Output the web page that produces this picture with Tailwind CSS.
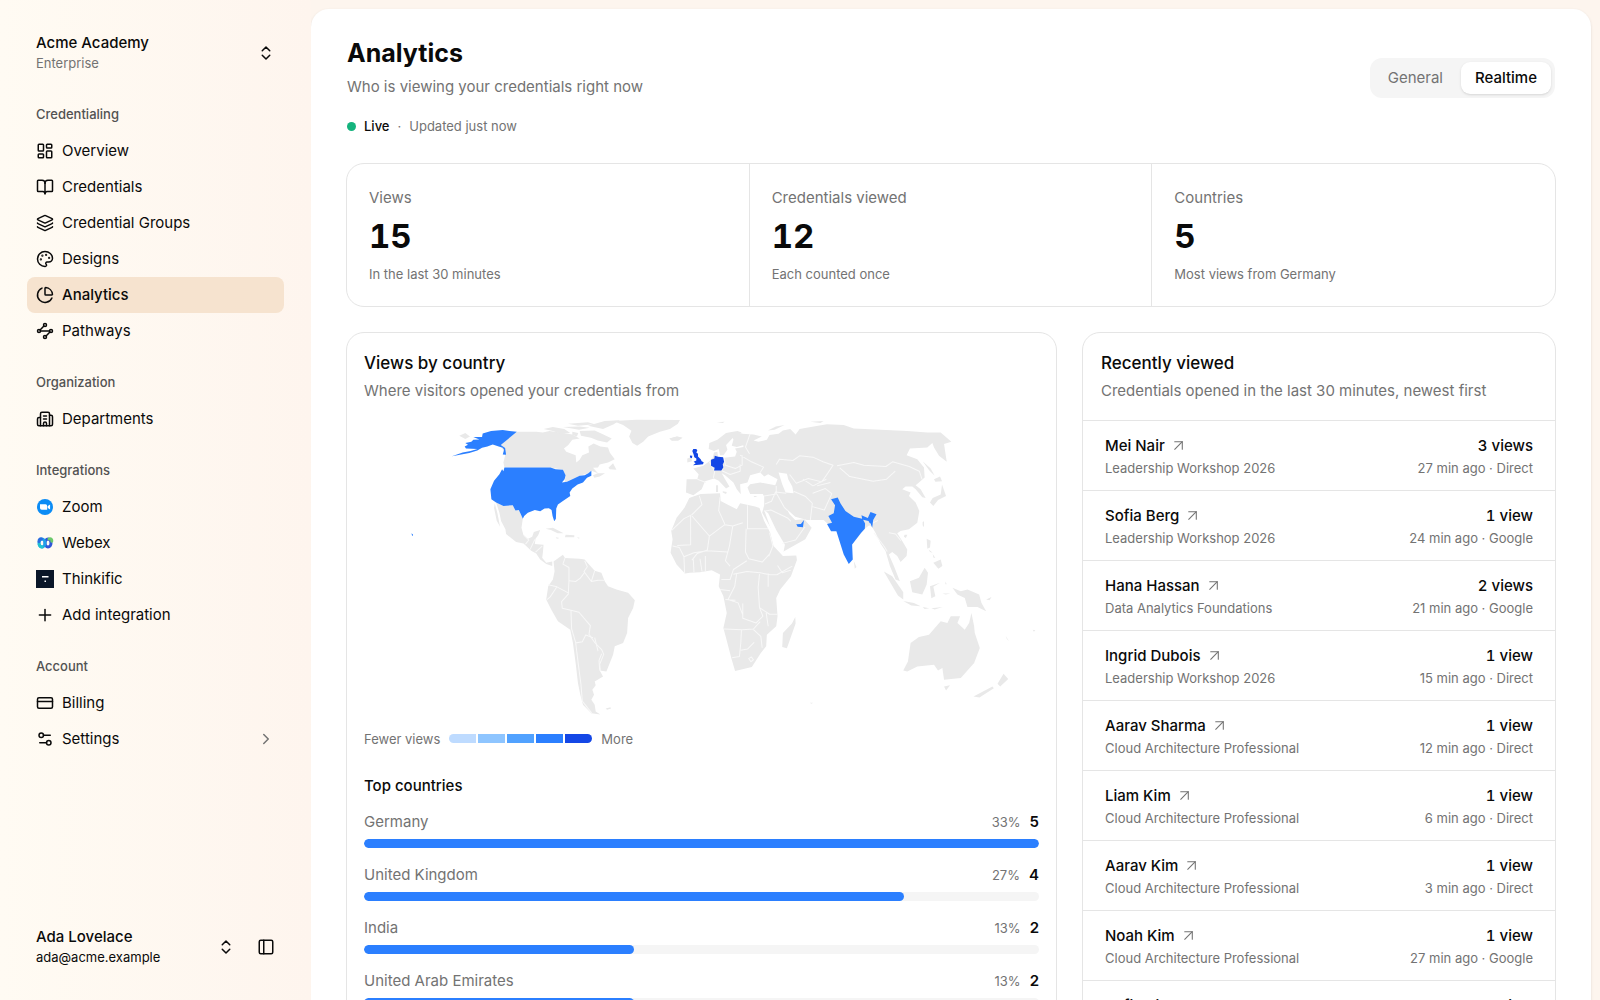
<!DOCTYPE html>
<html lang="en">
<head>
  <meta charset="UTF-8" />
  <meta name="viewport" content="width=device-width, initial-scale=1.0" />
  <title>Analytics - Acme Academy</title>
  <script src="https://cdn.jsdelivr.net/npm/@tailwindcss/browser@4"></script>
</head>
<body class="flex min-h-screen bg-[#fdf5ee] font-['Inter','Liberation_Sans',sans-serif] text-[15px] text-neutral-950">

  <!-- Sidebar -->
  <aside class="sticky top-0 flex h-screen w-[311px] shrink-0 flex-col bg-linear-to-r from-[#fffbf3] to-[#fef5ee] px-[27px] pb-6">
    <button class="flex h-[97px] items-center justify-between px-[9px] pt-[9px] text-left">
      <span class="flex flex-col">
        <span class="font-medium leading-5">Acme Academy</span>
        <span class="text-[13px] leading-5 text-neutral-500">Enterprise</span>
      </span>
      <svg class="size-[18px]" viewBox="0 0 24 24" fill="none" stroke="currentColor" stroke-width="2" stroke-linecap="round" stroke-linejoin="round"><path d="m7 15 5 5 5-5"/><path d="m7 9 5-5 5 5"/></svg>
    </button>

    <nav class="flex flex-1 flex-col gap-4">
      <div>
        <h2 class="flex h-9 items-center px-[9px] text-[13px] font-medium text-neutral-600">Credentialing</h2>
        <a href="#" class="flex h-9 items-center gap-2 rounded-lg px-[9px]">
          <svg class="size-[18px]" viewBox="0 0 24 24" fill="none" stroke="currentColor" stroke-width="2" stroke-linecap="round" stroke-linejoin="round"><rect width="7" height="9" x="3" y="3" rx="1"/><rect width="7" height="5" x="14" y="3" rx="1"/><rect width="7" height="9" x="14" y="12" rx="1"/><rect width="7" height="5" x="3" y="16" rx="1"/></svg>
          Overview
        </a>
        <a href="#" class="flex h-9 items-center gap-2 rounded-lg px-[9px]">
          <svg class="size-[18px]" viewBox="0 0 24 24" fill="none" stroke="currentColor" stroke-width="2" stroke-linecap="round" stroke-linejoin="round"><path d="M12 7v14"/><path d="M3 18a1 1 0 0 1-1-1V4a1 1 0 0 1 1-1h5a4 4 0 0 1 4 4 4 4 0 0 1 4-4h5a1 1 0 0 1 1 1v13a1 1 0 0 1-1 1h-6a3 3 0 0 0-3 3 3 3 0 0 0-3-3z"/></svg>
          Credentials
        </a>
        <a href="#" class="flex h-9 items-center gap-2 rounded-lg px-[9px]">
          <svg class="size-[18px]" viewBox="0 0 24 24" fill="none" stroke="currentColor" stroke-width="2" stroke-linecap="round" stroke-linejoin="round"><path d="M12.83 2.18a2 2 0 0 0-1.66 0L2.6 6.08a1 1 0 0 0 0 1.83l8.58 3.91a2 2 0 0 0 1.66 0l8.58-3.9a1 1 0 0 0 0-1.83z"/><path d="M2 12a1 1 0 0 0 .58.91l8.6 3.91a2 2 0 0 0 1.65 0l8.58-3.9A1 1 0 0 0 22 12"/><path d="M2 17a1 1 0 0 0 .58.91l8.6 3.91a2 2 0 0 0 1.65 0l8.58-3.9A1 1 0 0 0 22 17"/></svg>
          Credential Groups
        </a>
        <a href="#" class="flex h-9 items-center gap-2 rounded-lg px-[9px]">
          <svg class="size-[18px]" viewBox="0 0 24 24" fill="none" stroke="currentColor" stroke-width="2" stroke-linecap="round" stroke-linejoin="round"><path d="M12 22a1 1 0 0 1 0-20 10 9 0 0 1 10 9 5 5 0 0 1-5 5h-2.25a1.75 1.75 0 0 0-1.4 2.8l.3.4a1.75 1.75 0 0 1-1.4 2.8z"/><circle cx="13.5" cy="6.5" r=".5" fill="currentColor"/><circle cx="17.5" cy="10.5" r=".5" fill="currentColor"/><circle cx="6.5" cy="12.5" r=".5" fill="currentColor"/><circle cx="8.5" cy="7.5" r=".5" fill="currentColor"/></svg>
          Designs
        </a>
        <a href="#" aria-current="page" class="flex h-9 items-center gap-2 rounded-lg bg-[#f6e3cf] px-[9px] font-medium">
          <svg class="size-[18px]" viewBox="0 0 24 24" fill="none" stroke="currentColor" stroke-width="2" stroke-linecap="round" stroke-linejoin="round"><path d="M21 12c.552 0 1.005-.449.95-.998a10 10 0 0 0-8.953-8.951c-.55-.055-.998.398-.998.95v8a1 1 0 0 0 1 1z"/><path d="M21.21 15.89A10 10 0 1 1 8 2.83"/></svg>
          Analytics
        </a>
        <a href="#" class="flex h-9 items-center gap-2 rounded-lg px-[9px]">
          <svg class="size-[18px]" viewBox="0 0 24 24" fill="none" stroke="currentColor" stroke-width="2" stroke-linecap="round" stroke-linejoin="round"><path d="m10.586 5.414-5.172 5.172"/><path d="m18.586 13.414-5.172 5.172"/><path d="M6 12h12"/><circle cx="12" cy="20" r="2"/><circle cx="12" cy="4" r="2"/><circle cx="20" cy="12" r="2"/><circle cx="4" cy="12" r="2"/></svg>
          Pathways
        </a>
      </div>

      <div>
        <h2 class="flex h-9 items-center px-[9px] text-[13px] font-medium text-neutral-600">Organization</h2>
        <a href="#" class="flex h-9 items-center gap-2 rounded-lg px-[9px]">
          <svg class="size-[18px]" viewBox="0 0 24 24" fill="none" stroke="currentColor" stroke-width="2" stroke-linecap="round" stroke-linejoin="round"><path d="M10 12h4"/><path d="M10 8h4"/><path d="M14 21v-3a2 2 0 0 0-4 0v3"/><path d="M6 10H4a2 2 0 0 0-2 2v7a2 2 0 0 0 2 2h16a2 2 0 0 0 2-2V9a2 2 0 0 0-2-2h-2"/><path d="M6 21V5a2 2 0 0 1 2-2h8a2 2 0 0 1 2 2v16"/></svg>
          Departments
        </a>
      </div>

      <div>
        <h2 class="flex h-9 items-center px-[9px] text-[13px] font-medium text-neutral-600">Integrations</h2>
        <a href="#" class="flex h-9 items-center gap-2 rounded-lg px-[9px]">
          <svg class="size-[18px]" viewBox="0 0 18 18"><circle cx="9" cy="9" r="8" fill="#0b8cf5"/><path d="M4 6.200h5.500a1.700 1.700 0 0 1 1.700 1.700v3.900H5.700A1.700 1.700 0 0 1 4 10.100zM11.800 8l2.300-1.600v5.200L11.800 10z" fill="#fff"/></svg>
          Zoom
        </a>
        <a href="#" class="flex h-9 items-center gap-2 rounded-lg px-[9px]">
          <svg class="size-[18px]" viewBox="0 0 18 18" fill="none" stroke-width="3" stroke-linecap="round"><ellipse cx="12" cy="9" rx="3" ry="4" stroke="#2f56d8"/><path d="M13 5c2-.6 3 .4 2.800 2.200" stroke="#6cc96b"/><ellipse cx="6" cy="9" rx="3" ry="4" stroke="#1f9fe8"/><path d="M3 7.500c0-2 1-2.800 2.500-2.600" stroke="#2a6de0"/><path d="M3.200 10.500c.6 1.800 1.600 2.600 3 2.500" stroke="#20c3cf"/></svg>
          Webex
        </a>
        <a href="#" class="flex h-9 items-center gap-2 rounded-lg px-[9px]">
          <svg class="size-[18px]" viewBox="0 0 18 18"><path d="M0 0h18v18H0z" fill="#0a1628"/><path d="M6 6h6.500v1.500H6zM8.500 10.500h1.500v1.500H8.500z" fill="#fff"/></svg>
          Thinkific
        </a>
        <a href="#" class="flex h-9 items-center gap-2 rounded-lg px-[9px]">
          <svg class="size-[18px]" viewBox="0 0 24 24" fill="none" stroke="currentColor" stroke-width="2" stroke-linecap="round"><path d="M4.500 12h15"/><path d="M12 4.500v15"/></svg>
          Add integration
        </a>
      </div>

      <div>
        <h2 class="flex h-9 items-center px-[9px] text-[13px] font-medium text-neutral-600">Account</h2>
        <a href="#" class="flex h-9 items-center gap-2 rounded-lg px-[9px]">
          <svg class="size-[18px]" viewBox="0 0 24 24" fill="none" stroke="currentColor" stroke-width="2" stroke-linecap="round" stroke-linejoin="round"><rect width="20" height="14" x="2" y="5" rx="2"/><path d="M2 10h20"/></svg>
          Billing
        </a>
        <a href="#" class="flex h-9 items-center gap-2 rounded-lg px-[9px]">
          <svg class="size-[18px]" viewBox="0 0 24 24" fill="none" stroke="currentColor" stroke-width="2" stroke-linecap="round" stroke-linejoin="round"><path d="M14 17H5"/><path d="M19 7h-9"/><circle cx="17" cy="17" r="3"/><circle cx="7" cy="7" r="3"/></svg>
          <span class="flex-1">Settings</span>
          <svg class="size-[18px] text-neutral-500" viewBox="0 0 24 24" fill="none" stroke="currentColor" stroke-width="2" stroke-linecap="round" stroke-linejoin="round"><path d="m9 18 6-6-6-6"/></svg>
        </a>
      </div>
    </nav>

    <div class="flex items-center px-[9px] pb-[9px]">
      <button class="flex flex-1 items-center justify-between text-left">
        <span class="flex flex-col">
          <span class="font-medium leading-5">Ada Lovelace</span>
          <span class="text-[13px] leading-5">ada@acme.example</span>
        </span>
        <svg class="size-[18px]" viewBox="0 0 24 24" fill="none" stroke="currentColor" stroke-width="2" stroke-linecap="round" stroke-linejoin="round"><path d="m7 15 5 5 5-5"/><path d="m7 9 5-5 5 5"/></svg>
      </button>
      <button aria-label="Toggle sidebar" class="ml-[22px]">
        <svg class="size-[18px]" viewBox="0 0 24 24" fill="none" stroke="currentColor" stroke-width="2" stroke-linecap="round" stroke-linejoin="round"><rect width="18" height="18" x="3" y="3" rx="2"/><path d="M9 3v18"/></svg>
      </button>
    </div>
  </aside>

  <!-- Page -->
  <main class="my-[9px] mr-[9px] min-w-0 flex-1 rounded-[18px] bg-white px-[35px] pt-7 pb-9 shadow-sm">
    <header class="flex items-start justify-between px-px">
      <div>
        <h1 class="text-[25px] font-bold leading-8">Analytics</h1>
        <p class="mt-[6px] leading-6 text-neutral-500">Who is viewing your credentials right now</p>
        <p class="mt-[17px] flex items-center gap-2 text-[13px] leading-5 text-neutral-500">
          <span class="size-[9px] rounded-full bg-[#14b37d]"></span>
          <span class="font-medium text-neutral-950">Live</span>
          <span>·</span>
          <span>Updated just now</span>
        </p>
      </div>
      <div class="mt-[21px] flex h-10 items-center gap-1 rounded-xl bg-neutral-100 p-1 text-neutral-500">
        <button class="h-full px-[14px]">General</button>
        <button class="h-full rounded-[9px] bg-white px-[14px] font-medium text-neutral-950 shadow-sm">Realtime</button>
      </div>
    </header>

    <section class="mt-[27px] grid grid-cols-3 divide-x divide-neutral-200 rounded-[18px] border border-neutral-200">
      <div class="px-[22px] py-[22px]">
        <p class="leading-6 text-neutral-500">Views</p>
        <p class="mt-[6px] text-[33px] font-bold leading-10 tabular-nums">15</p>
        <p class="mt-2 text-[13px] leading-5 text-neutral-500">In the last 30 minutes</p>
      </div>
      <div class="px-[22px] py-[22px]">
        <p class="leading-6 text-neutral-500">Credentials viewed</p>
        <p class="mt-[6px] text-[33px] font-bold leading-10 tabular-nums">12</p>
        <p class="mt-2 text-[13px] leading-5 text-neutral-500">Each counted once</p>
      </div>
      <div class="px-[22px] py-[22px]">
        <p class="leading-6 text-neutral-500">Countries</p>
        <p class="mt-[6px] text-[33px] font-bold leading-10 tabular-nums">5</p>
        <p class="mt-2 text-[13px] leading-5 text-neutral-500">Most views from Germany</p>
      </div>
    </section>

    <div class="mt-[25px] grid grid-cols-[3fr_2fr] gap-[25px]">
      <section class="rounded-[18px] border border-neutral-200 px-[17px] pt-[18px] pb-6">
        <h2 class="text-[17px] font-medium leading-6">Views by country</h2>
        <p class="mt-1 leading-6 text-neutral-500">Where visitors opened your credentials from</p>

        <svg class="mt-2 w-full" viewBox="45 36 2019 930" role="img" aria-label="World map of views by country" stroke-linejoin="round">
          <!-- Americas -->
          <g fill="#e9e9e9">
            <path d="M502 98L560 98 580 100 600 96 640 102 668 106 690 118 668 122 656 138 643 148 650 158 678 168 680 190 690 182 698 168 718 160 716 142 732 133 752 142 775 145 780 160 795 180 775 190 750 196 745 205 730 206 745 222 725 215 716 222 690 230 668 240 645 250 648 228 640 212 603 205 465 205 462 190 468 165 452 138z"/>
            <path d="M582 90l28-6 34 6 18 12-30 2-22-8zM690 96l45-2 26 12 25 12-14 12-28-6-20-8-30-6zM640 84l50-2 30 4-32 6zM655 74l60-4 20 6-50 4zM715 80l50-14 45-2-18 12-32 14zM668 98l18 4-4 10-14-4z"/>
            <path d="M790 66L860 62 990 63 984 74 960 90 930 98 895 112 880 128 862 140 848 132 838 112 845 95 820 78zM958 118l22-6 18 4-12 8-20 1zM776 206l14-14 10 20-20-2zM730 228l14-6 22 0-16 10-16 4zM330 110l18-8 14 10-14 8z"/>
            <path d="M440 310L462 320 490 318 498 334 508 332 520 358 516 385 522 408 536 418 548 412 553 398 572 392 566 408 558 418 556 434 582 436 580 460 578 475 590 490 608 486 608 500 590 494 572 480 560 462 545 454 522 432 500 428 470 404 468 390 455 365 450 340z"/>
            <path d="M436 312l8 30 8 40-10-18-8-38zM588 388l22-3 32 17-18 0-20-10zM648 406l26 2 0 6-28 0zM618 414l12 2-8 2zM682 414l8 1-2 3zM768 926l14-4 2 4-12 4z"/>
            <path d="M612 486L640 466 646 476 690 478 705 480 722 500 735 514 755 520 765 545 775 560 800 570 835 580 855 602 850 625 835 655 832 700 820 730 795 740 790 765 770 815 750 812 760 830 735 845 738 856 728 870 733 885 725 900 735 915 738 935 752 944 725 940 700 915 692 885 685 850 678 790 670 730 662 690 625 665 605 630 590 600 596 560 610 540 615 515z"/>
          </g>
          <g fill="none" stroke="#f8f8f8" stroke-width="3">
            <path d="M646 476l-6 18 18 10 0 40-2 40-20 22 2 20 26 6 24 6 34 40-4 26 18 26 20 20 6 14-12 30 2 20"/>
            <path d="M705 484l8 18-10 14 22 30M735 514l-10 32 20-4 18 0M658 544l20 2 14-10 12-16M596 556l26 6 34 18M622 562l-20 30-10 8M664 632l2 56 12 40 8 66 8 60 4 50 30 38M678 730l20-4 10-20 22 8M735 714l10 40M756 762l-8 20 2 30M524 408l14 14-10 12M556 420l-14 30M578 440l-20 18"/>
          </g>
          <path fill="#2b7fff" d="M465 205H603L618 210 640 212 648 228 645 240 637 250 652 248 668 240 690 230 705 228 716 222 725 215 725 230 712 236 700 250 684 256 668 268 660 280 662 290 640 305 625 316 620 328 619 358 614 366 609 350 606 332 598 327 585 328 572 336 556 332 535 340 524 350 520 358 514 345 508 332 498 334 490 318 462 320 440 310 426 300 423 270 434 245 450 225 458 210 462 216z"/>
          <path fill="#2b7fff" d="M502 98L480 96 460 93 425 96 400 103 398 114 372 114 390 121 372 122 366 128 348 132 356 137 346 142 350 148 384 150 364 156 340 160 308 171 360 162 384 154 398 146 414 142 430 136 448 142 460 146 464 152 460 166 470 167 467 147 454 138zM187 402l5 4-3 5zM180 394l3 2z"/>

          <!-- Europe, Africa and the Middle East -->
          <g transform="translate(870 0)">
            <g fill="#e9e9e9">
              <path d="M148 296L160 292 182 284 240 282 242 305 262 316 290 330 300 312 345 322 358 326 372 365 390 400 400 440 428 470 468 468 470 482 452 530 420 570 408 595 412 650 408 680 380 705 378 740 362 760 335 802 310 808 285 814 275 780 258 715 250 685 260 640 250 590 236 560 240 525 215 512 180 518 150 520 135 522 110 495 92 460 98 420 94 395 110 355 134 325z"/>
              <path d="M465 652L466 672 440 746 426 742 428 700 455 672zM90 118l22-6 14 4-12 8-18 0zM142 178l12-4 2 12-14 4z"/>
              <path d="M206 150L208 132 232 122 258 102 292 96 305 100 290 106 275 120 258 138 262 152 250 168 240 168 236 150 222 156zM275 106L292 98 312 106 312 138 290 144 275 140 280 122z"/>
              <path d="M140 240L172 240 176 225 160 208 190 200 208 186 218 176 222 160 232 158 234 174 252 176 285 172 290 158 285 148 310 144 306 104 340 106 365 112 340 124 355 128 380 122 388 108 415 104 428 94 450 90 466 106 478 90 520 82 560 76 610 78 640 88 720 92 800 96 860 100 900 100 932 128 910 135 918 188 895 170 880 145 875 132 860 145 808 148 798 168 830 180 850 205 852 235 835 250 825 258 840 270 855 296 845 294 825 270 815 262 795 262 785 270 810 280 805 290 825 310 836 335 830 370 805 390 780 395 770 402 785 425 800 450 798 470 780 488 770 470 755 458 745 465 760 500 778 545 765 540 748 500 735 455 720 432 705 400 690 375 673 388 635 435 588 395 560 372 550 362 500 362 465 352 440 330 448 345 465 362 492 360 514 385 495 420 430 456 424 440 400 400 366 340 372 318 372 292 368 284 330 284 322 265 330 255 360 250 405 258 412 240 384 225 372 232 360 220 330 228 322 250 300 255 302 285 290 270 280 250 255 228 245 222 255 240 268 262 258 268 236 245 222 238 195 246 185 270 160 288 138 280z"/>
              <path d="M228 258l6 0 0 20-6 0zM248 276l12 2-2 6-10-4zM383 94l24-12 26-4-30 14zM230 70l24-2-6 4zM510 68l40-2-10 6zM340 290l12 0-8 4z"/>
            </g>
            <path fill="#fff" d="M415 220L440 224 444 240 456 262 460 282 436 280 426 255zM372 332l12 10 24 50 26 44-4 20-30-44z"/>
            <g fill="none" stroke="#f8f8f8" stroke-width="3">
              <path d="M178 290l8 26-30 30-24 12M152 350l0 86-40 2M156 350l52 60 46-34 24 4 30-10M208 410l-6 42-30 10-16 20M240 294l-4 40 18 40M322 318v70h62M278 380l-10 60-12 44 14 16M318 388l-2 70 10 20 40 10 24-26M132 358l-36 34M98 440l20 4 14 28 30-12 40-6 60 4M132 472l2 50M160 480l2 38M180 478l6 38M196 470l0 46M244 540l26 0 10-30 40-26M280 524l40-8 40 4 30 6 20 0 46-26M290 520l-6 40-20 40 30 10 14 36M240 570l30 4M256 600l30 2M308 612l0 44 40 14 20-20-10-26M358 524l-4 40 4 60 30 20 24 0M384 522l0 40M252 688l54 2 34-2 20-22M304 690l-2 40-4 40-22 4M340 690l22 20 4 34M302 752l20-4 20-20M378 640l6 40M326 776l8-4 6 8-8 6zM388 400l10 40-12 30M412 498l14 22 26-8"/>
              <path d="M172 240l26 10M208 188l16 28-4 20M252 176l4 22 30 10 20-10 0-30M252 198l-8 16 26 12 30-10 0-20M300 168l34 20 36 16-10 16M330 104l-14 40 12 20M372 290l36-6 0-24M374 314l20-8 12-28 32 4M410 284l22 40 10 10M372 336l20-4 50 24 10 10M426 432l40-10 28-40M460 276l36 16 20 20-6 50M516 322l36 10 22-48M408 196l10-16 40 4 20-14 40 4 30 14 30 10-20 30-14 20-40-10-36 14-20-26M558 240l-40 20-30-20M530 260l40-10M575 284l-20-16-38 14"/>
              <path d="M590 200l50-10 30 8 66 4 20-14 50 14 30 14 8 24M598 206l30 26 70 14 40-6 26-24M690 375l22-12M745 400l20 4 16 20M700 400l30 40 10 16"/>
            </g>
            <g fill="#1447e6">
              <path d="M157 156l3-6 9 0 3 4-3 6 5 4 0 8 8 8 3 6 6 3-2 6-12 2-18 1 8-6-6-4 8-4 0-6-6-4-2-8zM150 169l7 1-1 7-6-2z"/>
              <path d="M213 182l10-4 1-8 10 3 15 1 3 14-4 8 2 8-6 10-22 0 2-8-11-6z"/>
            </g>
            <path fill="#2b7fff" d="M468 375l14-1 9-12-3 22-16-2z"/>
          </g>

          <!-- South Asia and Oceania -->
          <g transform="translate(1350 0)">
            <g fill="#e9e9e9">
              <path d="M160 485l8 18-5 5zM250 516L275 530 308 578 308 600 292 588zM308 604l32 6 20 10-28-2zM366 622l20 4-14 2zM392 626l34-4-24 8zM328 545L355 535 372 505 382 520 378 555 365 585 335 578z"/>
              <path d="M388 560l30-10-20 12 6 28-12 6zM378 418l12 6-2 20-8 4zM398 490l22-10 5 20-12 8zM384 450l12 10-8-2zM396 464l8 12-6-2zM434 546l4 8-4 0zM455 565L480 575 500 570 535 585 542 610 556 635 530 622 500 622 492 595 470 585zM425 582l24 0-14 3zM556 600l16-8-6 10z"/>
              <path d="M330 730L355 712 385 705 420 665 440 670 450 650 478 650 470 670 492 690 505 670 512 640 520 680 522 700 537 745 520 790 480 835 430 840 425 805 412 812 400 795 350 800 320 815 308 812 322 785z"/>
              <path d="M430 860l18-4-12 16zM518 890l57-30 4 5-43 28zM590 852l18-30 14 16-24 22zM614 708l10 16-6-6zM695 690l8 2-4 4zM706 684l10-2zM590 602l8 6zM612 628l6 4z"/>
              <path d="M388 310l8-14 24-10 4-30 12 34-24 12-14 18zM400 240l18-8 6 14-20 2zM366 186l24 22 12 22-16-16zM366 368l4-2 0 18-4-6zM312 406l8 0-4 10-6-4zM28 909l10 0-4 3z"/>
            </g>
            <path fill="#2b7fff" d="M92 300L112 295 120 312 135 335 160 352 185 358 183 348 202 356 210 338 228 345 218 362 215 385 210 372 194 372 193 388 182 400 155 435 157 480 145 494 130 465 108 396 92 396 80 374 95 370 84 350 100 342 104 318z"/>
            <path fill="#e9e9e9" d="M188 361l16 4 8 14-16-2z"/>
          </g>
        </svg>

        <div class="mt-[7px] flex items-center gap-[9px] text-[13px] leading-5 text-neutral-500">
          Fewer views
          <div class="flex gap-[2px] overflow-hidden rounded-full">
            <span class="h-[9px] w-[27px] bg-[#bedbff]"></span>
            <span class="h-[9px] w-[27px] bg-[#8ec5ff]"></span>
            <span class="h-[9px] w-[27px] bg-[#51a2ff]"></span>
            <span class="h-[9px] w-[27px] bg-[#2b7fff]"></span>
            <span class="h-[9px] w-[27px] bg-[#1447e6]"></span>
          </div>
          More
        </div>

        <h3 class="mt-[25px] font-medium leading-6">Top countries</h3>
        <ul id="countries" class="mt-3 flex flex-col gap-[15px]"></ul>
      </section>

      <section class="rounded-[18px] border border-neutral-200">
        <div class="border-b border-neutral-200 px-[18px] pt-[18px] pb-[17px]">
          <h2 class="text-[17px] font-medium leading-6">Recently viewed</h2>
          <p class="mt-1 leading-6 text-neutral-500">Credentials opened in the last 30 minutes, newest first</p>
        </div>
        <ul id="recent" class="divide-y divide-neutral-200"></ul>
      </section>
    </div>
  </main>

  <script>
    const countries = [
      { name: 'Germany', share: 33, views: 5 },
      { name: 'United Kingdom', share: 27, views: 4 },
      { name: 'India', share: 13, views: 2 },
      { name: 'United Arab Emirates', share: 13, views: 2 },
      { name: 'United States', share: 13, views: 2 },
    ];

    const recent = [
      ['Mei Nair', 'Leadership Workshop 2026', '3 views', '27 min ago · Direct'],
      ['Sofia Berg', 'Leadership Workshop 2026', '1 view', '24 min ago · Google'],
      ['Hana Hassan', 'Data Analytics Foundations', '2 views', '21 min ago · Google'],
      ['Ingrid Dubois', 'Leadership Workshop 2026', '1 view', '15 min ago · Direct'],
      ['Aarav Sharma', 'Cloud Architecture Professional', '1 view', '12 min ago · Direct'],
      ['Liam Kim', 'Cloud Architecture Professional', '1 view', '6 min ago · Direct'],
      ['Aarav Kim', 'Cloud Architecture Professional', '1 view', '3 min ago · Direct'],
      ['Noah Kim', 'Cloud Architecture Professional', '1 view', '27 min ago · Google'],
      ['Sofia Silva', 'Data Analytics Foundations', '1 view', '18 min ago · Direct'],
    ];

    document.getElementById('countries').innerHTML = countries.map(c => `
      <li>
        <div class="flex items-center justify-between leading-6 text-neutral-500">
          <span>${c.name}</span>
          <span class="flex items-center gap-[9px]">
            <span class="text-[13px]">${c.share}%</span>
            <span class="font-semibold text-neutral-950">${c.views}</span>
          </span>
        </div>
        <div class="mt-[5px] h-[9px] overflow-hidden rounded-full bg-neutral-100">
          <div class="h-full rounded-full bg-[#2b7fff]" style="width: ${c.views / countries[0].views * 100}%"></div>
        </div>
      </li>
    `).join('');

    document.getElementById('recent').innerHTML = recent.map(([name, credential, views, source]) => `
      <li class="flex h-[70px] items-center justify-between px-[22px]">
        <div>
          <a href="#" class="flex items-center gap-[7px] font-medium leading-6">
            ${name}
            <svg class="size-[13px] text-neutral-500" viewBox="0 0 24 24" fill="none" stroke="currentColor" stroke-width="2" stroke-linecap="round" stroke-linejoin="round"><path d="M5 5h14v14"/><path d="M5 19 19 5"/></svg>
          </a>
          <p class="text-[13px] leading-5 text-neutral-500">${credential}</p>
        </div>
        <div class="text-right">
          <p class="font-medium leading-6 tabular-nums">${views}</p>
          <p class="text-[13px] leading-5 text-neutral-500">${source}</p>
        </div>
      </li>
    `).join('');
  </script>
</body>
</html>
